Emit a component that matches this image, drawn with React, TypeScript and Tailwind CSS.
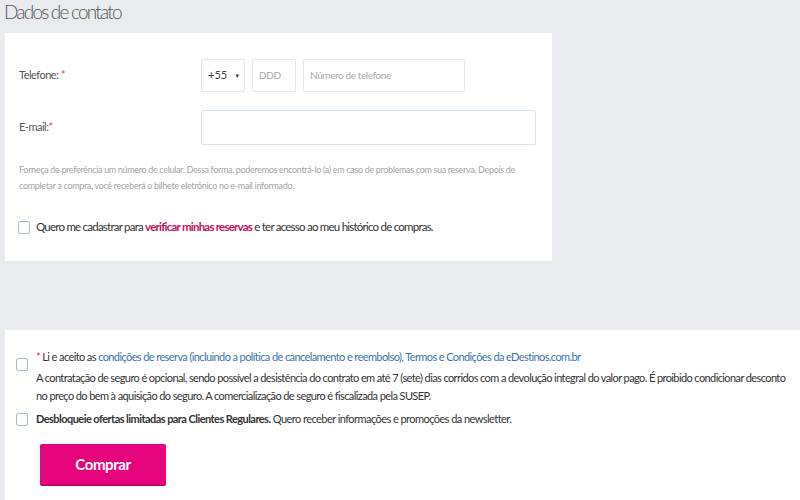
import React from 'react';

const font = { fontFamily: 'Lato, "Liberation Sans", sans-serif' };

const Box: React.FC = () => (
  <span className="inline-block w-[12px] h-[13px] shrink-0 border border-[#a9bccb] rounded-[2px] bg-white" />
);

const App: React.FC = () => {
  return (
    <div className="w-[800px] h-[500px] overflow-hidden bg-[#e9ebef] text-[#444]" style={font}>
      {/* Title */}
      <h1 className="h-[33px] pl-[4px] pt-[1px] text-[19px] leading-[22px] font-light tracking-[-1.8px] text-[#555]">Dados de contato</h1>

      {/* Contact card */}
      <div className="ml-[5px] w-[547px] h-[228px] bg-white pl-[14px] pt-[26px]">
        <div className="flex items-center h-[33px]">
          <label className="w-[182px] text-[11px] tracking-[-0.5px] text-[#555]">
            Telefone: <span className="text-[#e8336e]">*</span>
          </label>
          <div className="flex gap-[7px]">
            <div className="w-[44px] h-[33px] border border-[#e3e6ea] rounded-[2px] flex items-center pl-[6px] text-[11px] text-[#444]">
              +55 <span className="ml-[7px] text-[6px]">▼</span>
            </div>
            <div className="w-[44px] h-[33px] border border-[#e3e6ea] rounded-[2px] flex items-center pl-[6px] text-[10px] tracking-[-0.3px] text-[#aaa]">
              DDD
            </div>
            <div className="w-[162px] h-[33px] border border-[#e3e6ea] rounded-[2px] flex items-center pl-[6px] text-[10px] tracking-[-0.4px] text-[#aaa]">
              Número de telefone
            </div>
          </div>
        </div>

        <div className="flex items-center h-[35px] mt-[18px]">
          <label className="w-[182px] text-[11px] tracking-[-0.5px] text-[#555]">
            E-mail:<span className="text-[#e8336e]">*</span>
          </label>
          <div className="w-[335px] h-[35px] border border-[#dfe3e8] border-t-[#cfe3f0] rounded-[2px]" />
        </div>

        <p className="mt-[17px] text-[9px] leading-[16px] tracking-[-0.33px] whitespace-nowrap text-[#a4a4a4]">
          Forneça de preferência um número de celular. Dessa forma, poderemos encontrá-lo (a) em caso de problemas com sua reserva. Depois de
          <br />
          completar a compra, você receberá o bilhete eletrônico no e-mail informado.
        </p>

        <div className="flex items-center gap-[6px] mt-[25px] -ml-[1px] h-[16px]">
          <Box />
          <span className="text-[11.5px] tracking-[-0.77px] whitespace-nowrap text-[#333]">
            Quero me cadastrar para <b className="text-[#c8105f]">verificar minhas reservas</b> e ter acesso ao meu histórico de compras.
          </span>
        </div>
      </div>

      {/* Terms card */}
      <div className="ml-[5px] mt-[69px] h-[200px] bg-white pl-[11px] pt-[18px]">
        <div className="flex gap-[8px]">
          <div className="pt-[5px]"><Box /></div>
          <div className="text-[11px] tracking-[-0.6px] whitespace-nowrap text-[#333]">
            <p className="leading-[18px] mb-[3px]">
              <span className="text-[#e8336e]">*</span> Li e aceito as{' '}
              <span className="text-[#3b74b0]">condições de reserva (incluindo a política de cancelamento e reembolso), Termos e Condições da eDestinos.com.br</span>
            </p>
            <p className="leading-[18px]">
              A contratação de seguro é opcional, sendo possível a desistência do contrato em até 7 (sete) dias corridos com a devolução integral do valor pago. É proibido condicionar desconto
              <br />
              no preço do bem à aquisição do seguro. A comercialização de seguro é fiscalizada pela SUSEP.
            </p>
          </div>
        </div>

        <div className="flex items-center gap-[8px] mt-[5px] h-[18px]">
          <Box />
          <span className="text-[11px] tracking-[-0.55px] whitespace-nowrap text-[#333]">
            <b>Desbloqueie ofertas limitadas para Clientes Regulares.</b> Quero receber informações e promoções da newsletter.
          </span>
        </div>

        <button className="mt-[16px] ml-[24px] w-[126px] h-[42px] bg-[#e6047c] border-b-2 border-[#c9006a] rounded-[2px] text-white text-[15px] font-bold tracking-[-0.4px]">
          Comprar
        </button>
      </div>
    </div>
  );
};

export default App;
